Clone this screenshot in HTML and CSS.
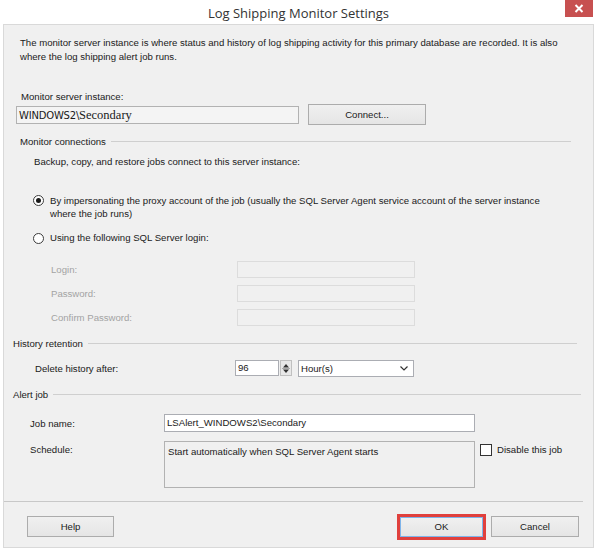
FILE: index.html
```html
<!DOCTYPE html>
<html>
<head>
<meta charset="utf-8">
<link rel="stylesheet" href="styles.css">
</head>
<body>
<div class="window">
  <header class="titlebar">
    <span></span>
    <span class="title">Log Shipping Monitor Settings</span>
    <span class="close"><svg width="10" height="9" viewBox="0 0 10 9"><path d="M1.5 1 L8.5 8 M8.5 1 L1.5 8" stroke="#fff" stroke-width="2"/></svg></span>
  </header>
  <div class="client">
    <p class="intro">The monitor server instance is where status and history of log shipping activity for this primary database are recorded. It is also where the log shipping alert job runs.</p>
    <div class="field-label">Monitor server instance:</div>
    <div class="server-row">
      <div class="textbox server">WINDOWS2\<span class="serif">Secondary</span></div>
      <div class="btn connect">Connect...</div>
    </div>

    <div class="group group-conn"><span>Monitor connections</span><i class="rule"></i></div>
    <div class="note">Backup, copy, and restore jobs connect to this server instance:</div>

    <div class="radio-row first">
      <span class="radio checked"></span>
      <span class="radio-text">By impersonating the proxy account of the job (usually the SQL Server Agent service account of the server instance<br>where the job runs)</span>
    </div>
    <div class="radio-row second">
      <span class="radio"></span>
      <span class="radio-text">Using the following SQL Server login:</span>
    </div>

    <div class="login-grid">
      <span class="dis-label">Login:</span><span class="dis-box"></span>
      <span class="dis-label">Password:</span><span class="dis-box"></span>
      <span class="dis-label">Confirm Password:</span><span class="dis-box"></span>
    </div>

    <div class="group group-hist"><span>History retention</span><i class="rule"></i></div>
    <div class="delete-row">
      <span class="delete-label">Delete history after:</span>
      <span class="spin-box">96</span>
      <span class="spin-btn"><svg width="10" height="15" viewBox="0 0 10 15"><path d="M5 3 L8 6.5 L2 6.5 Z M2 8.5 L8 8.5 L5 12 Z" fill="#333"/><path d="M1 7.5 H9" stroke="#aaa" stroke-width="1"/></svg></span>
      <span class="combo">Hour(s)<svg width="8" height="5" viewBox="0 0 8 5"><path d="M0.5 0.5 L4 4 L7.5 0.5" stroke="#333" stroke-width="1.2" fill="none"/></svg></span>
    </div>

    <div class="group group-alert"><span>Alert job</span><i class="rule"></i></div>
    <div class="job-row">
      <span class="job-label">Job name:</span>
      <span class="textbox job">LSAlert_WINDOWS2\Secondary</span>
    </div>
    <div class="schedule-row">
      <span class="job-label">Schedule:</span>
      <span class="schedule">Start automatically when SQL Server Agent starts</span>
      <span class="check"></span>
      <span class="check-text">Disable this job</span>
    </div>

    <div class="separator"></div>
    <div class="buttons">
      <div class="btn help">Help</div>
      <div class="spacer"></div>
      <div class="ok-wrap"><div class="btn ok">OK</div></div>
      <div class="btn cancel">Cancel</div>
    </div>
  </div>
</div>
</body>
</html>
```
FILE: styles.css
```css
* { box-sizing: border-box; }
html, body { margin: 0; padding: 0; background: #ffffff; }
body {
  width: 597px;
  height: 550px;
  overflow: hidden;
  font-family: "Liberation Sans", Arial, sans-serif;
  font-size: 9.6px;
  color: #1a1a1a;
}
.window { width: 597px; height: 550px; }

.titlebar {
  height: 24px;
  display: grid;
  grid-template-columns: 1fr auto 1fr;
  align-items: start;
}
.title {
  font-family: "Open Sans", "Noto Sans", sans-serif;
  font-size: 13px;
  color: #333;
  line-height: 26px;
}
.close {
  justify-self: end;
  margin-right: 4px;
  margin-top: 0;
  width: 28px;
  height: 17px;
  background: #c75050;
  display: flex;
  align-items: center;
  justify-content: center;
}

.client {
  margin-left: 3px;
  width: 591px;
  height: 524px;
  border: 1px solid #d9d9d9;
  background: #f0f0f0;
  padding-top: 11px;
}

.intro {
  margin: 0;
  padding-left: 16px;
  line-height: 14px;
  height: 28px;
  padding-right: 30px;
}
.field-label {
  margin-top: 26px;
  height: 14px;
  line-height: 14px;
  padding-left: 17px;
}
.server-row {
  height: 21px;
  display: flex;
  align-items: center;
  padding-left: 12px;
}
.textbox {
  border: 1px solid #abadb3;
  background: #fff;
  height: 18px;
  line-height: 16px;
  padding-left: 2px;
  white-space: nowrap;
}
.textbox.server {
  width: 283px;
  background: #f4f4f4;
  border-color: #b2b2b2;
  font-family: "DejaVu Sans", "Liberation Sans", sans-serif;
  font-size: 10px;
  letter-spacing: -0.2px;
}
.serif {
  font-family: "Liberation Serif", "Times New Roman", serif;
  font-size: 12.5px;
  letter-spacing: 0;
}
.btn {
  border: 1px solid #acacac;
  background: linear-gradient(#f0f0f0, #e5e5e5);
  height: 21px;
  display: flex;
  align-items: center;
  justify-content: center;
}
.btn.connect { width: 118px; margin-left: 9px; }

.group {
  display: flex;
  align-items: center;
  height: 14px;
  padding-left: 16px;
}
.rule {
  flex: 1;
  height: 1px;
  background: #cfcfcf;
  margin-left: 5px;
}
.group-conn { margin-top: 9px; }
.group-conn .rule { margin-right: 22px; }
.group-hist { margin-top: 10px; padding-left: 9px; }
.group-hist .rule { margin-right: 16px; }
.group-alert { margin-top: 10px; padding-left: 9px; }
.group-alert .rule { margin-right: 12px; }

.note {
  margin-top: 7px;
  height: 14px;
  line-height: 14px;
  padding-left: 30px;
}

.radio-row {
  display: flex;
  align-items: flex-start;
  padding-left: 29px;
}
.radio-row.first { margin-top: 25px; height: 26px; }
.radio-row.second { margin-top: 11px; height: 14px; }
.radio-text { line-height: 13px; padding-left: 6px; }
.radio-row.second .radio-text { line-height: 14px; }
.radio {
  width: 11px;
  height: 11px;
  border: 1px solid #3c3c3c;
  border-radius: 50%;
  background: #fff;
  margin-top: 1px;
  flex: none;
  display: flex;
  align-items: center;
  justify-content: center;
}
.radio-row.second .radio { margin-top: 1.5px; }
.radio.checked::after {
  content: "";
  width: 5px;
  height: 5px;
  border-radius: 50%;
  background: #1a1a1a;
}

.login-grid {
  margin-top: 16px;
  display: grid;
  grid-template-columns: 186px 178px;
  grid-auto-rows: 17px;
  row-gap: 7px;
  padding-left: 47px;
  align-items: center;
}
.dis-label { color: #a3a3a3; }
.dis-box {
  height: 17px;
  border: 1px solid #dcdcdc;
  background: #f0f0f0;
}

.delete-row {
  margin-top: 9px;
  height: 18px;
  display: flex;
  align-items: center;
  padding-left: 31px;
}
.delete-label { width: 200px; }
.spin-box {
  width: 44px;
  height: 16px;
  border: 1px solid #abadb3;
  background: #fff;
  line-height: 14px;
  padding-left: 2px;
}
.spin-btn {
  margin-left: 1px;
  width: 12px;
  height: 16px;
  border: 1px solid #c0c0c0;
  background: #e8e8e8;
  display: flex;
  align-items: center;
  justify-content: center;
}
.combo {
  margin-left: 6px;
  width: 116px;
  height: 17px;
  border: 1px solid #abadb3;
  background: #fff;
  display: flex;
  align-items: center;
  justify-content: space-between;
  padding: 0 5px 0 2px;
}

.job-row {
  margin-top: 13px;
  height: 18px;
  display: flex;
  align-items: center;
  padding-left: 26px;
}
.job-label { width: 134px; flex: none; }
.textbox.job { width: 311px; }

.schedule-row {
  margin-top: 9px;
  height: 47px;
  display: flex;
  align-items: flex-start;
  padding-left: 26px;
}
.schedule-row .job-label { line-height: 14px; margin-top: 2px; }
.schedule {
  width: 311px;
  height: 47px;
  border: 1px solid #b2b2b2;
  background: #f0f0f0;
  padding: 3px 0 0 3px;
  line-height: 14px;
}
.check {
  margin-left: 5px;
  margin-top: 3px;
  width: 12px;
  height: 12px;
  border: 1px solid #333;
  background: #fff;
  flex: none;
}
.check-text { margin-left: 5px; margin-top: 2px; line-height: 14px; }

.separator {
  margin-top: 13px;
  height: 1px;
  background: #c8c8c8;
  margin-right: 10px;
}
.buttons {
  margin-top: 14px;
  height: 21px;
  display: flex;
  padding-left: 23px;
  align-items: center;
}
.btn.help { width: 87px; }
.spacer { flex: 1; }
.ok-wrap {
  border: 3px solid #e0403d;
  padding: 0;
  margin-right: 5px;
}
.btn.ok {
  width: 83px;
  height: 20px;
  border-color: #7eb4ea;
}
.btn.cancel { width: 88px; margin-right: 14px; }
```
